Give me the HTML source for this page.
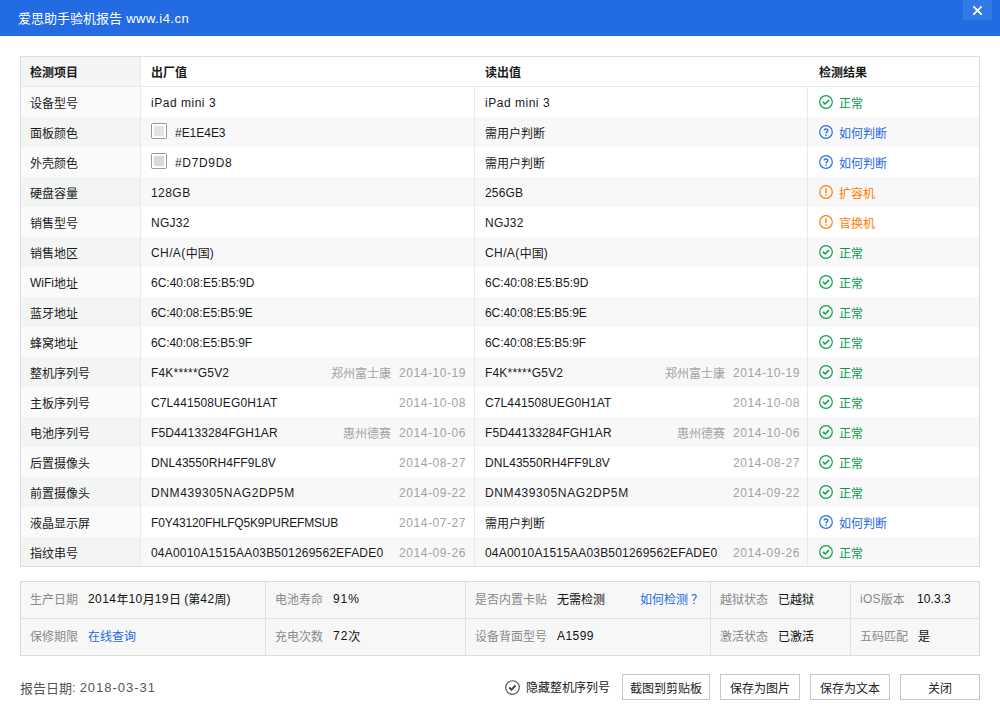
<!DOCTYPE html>
<html lang="zh-CN">
<head>
<meta charset="utf-8">
<title>爱思助手验机报告</title>
<style>
*{margin:0;padding:0;box-sizing:border-box}
html,body{width:1000px;height:720px;overflow:hidden;background:#fff}
body{position:relative;font-family:"Liberation Sans","Noto Sans CJK SC",sans-serif;font-size:12px;color:#1a1a1a}
.abs{position:absolute}
.z{position:relative;top:1px}
#bar{left:0;top:0;width:1000px;height:36px;background:#236be3}
#title{left:18px;top:1px;height:36px;line-height:36px;color:#fff;font-size:13px;white-space:nowrap}
#title .z{top:0}
#close{left:963px;top:0;width:29px;height:20px;background:#3179e7}
#tbl{left:20px;top:56px;width:960px;height:511px;border:1px solid #dedede;background:#fff;overflow:hidden}
.r{position:absolute;left:0;width:958px;height:30px;line-height:30px;white-space:nowrap}
.r.alt{background:#f8f8f8}
.c1{position:absolute;left:0;top:0;width:119px;height:30px;background:#fafafa}
.c1 b{position:absolute;left:9px;top:1px;font-weight:normal}
.alt .c1{background:#f3f4f4}
.c{position:absolute;top:1px;height:30px}
.c2{left:130px}.c3{left:464px}.c4{left:798px}
.fac{position:absolute;top:1px;color:#a3a3a3}
.dt{position:absolute;top:1px;color:#a3a3a3}
.il{position:absolute;color:#8a8a8a;white-space:nowrap;height:36px;line-height:36px}
.iv{position:absolute;color:#111;white-space:nowrap;height:36px;line-height:36px}
.g{color:#0a9a4a}.b{color:#2468e4}.o{color:#ff7b00}
.ic{position:absolute;left:0;top:7px;width:14px;height:14px}
.st{position:absolute;left:20px;top:0}
.vl{position:absolute;top:30px;width:1px;height:480px;background:#e9e9e9}
.sw{position:absolute;left:0px;top:5px;width:16px;height:16px;border:1px solid #999;border-radius:1.5px;background:#fff}
.sw i{position:absolute;left:2px;top:2px;width:10px;height:10px}
#hd{top:0;height:29px;line-height:29px;font-weight:bold;background:#fff}
#hd .c1{height:29px;background:#f3f4f4}
#hd .c1 b{font-weight:bold}
#info{left:20px;top:581px;width:960px;height:75px;border:1px solid #dcdcdc;background:#f7f7f7}
.iv i{font-style:normal;margin-left:3px}
.ivl{position:absolute;top:0;width:1px;height:73px;background:#e2e2e2}
.btn{position:absolute;top:674px;height:26px;line-height:26px;border:1px solid #c6c6c6;background:#fff;text-align:center;color:#222}
</style>
</head>
<body>
<div id="bar" class="abs"></div>
<div id="title" class="abs"><span class="z">爱思助手验机报告</span><span style="letter-spacing:0.51px"> www.i4.cn</span></div>
<div id="close" class="abs"><svg width="29" height="20" viewBox="0 0 29 20"><path d="M10.3 6.3 L18.7 14.7 M18.7 6.3 L10.3 14.7" stroke="#fff" stroke-width="1.9" fill="none"/></svg></div>
<div id="tbl" class="abs">
<div id="hd" class="r"><div class="c1"><b><span class="z">检测项目</span></b></div><div class="c c2"><span class="z">出厂值</span></div><div class="c c3"><span class="z">读出值</span></div><div class="c c4"><span class="z">检测结果</span></div></div>
<div class="abs" style="left:0;top:29px;width:958px;height:1px;background:#e6e6e6"></div>
<div class="r" style="top:30px"><div class="c1"><b><span class="z">设备型号</span></b></div><div class="c c2"><span style="letter-spacing:0.52px">iPad mini 3</span></div><div class="c c3"><span style="letter-spacing:0.52px">iPad mini 3</span></div><div class="c c4 g"><svg class="ic" viewBox="0 0 14 14"><circle cx="7" cy="7" r="6.3" fill="none" stroke="#0f9f4f" stroke-width="1.2"/><path d="M3.9 6.9 L6.1 9 L10 5.1" fill="none" stroke="#0f9f4f" stroke-width="1.5"/></svg><span class="st"><span class="z">正常</span></span></div></div>
<div class="r alt" style="top:60px"><div class="c1"><b><span class="z">面板颜色</span></b></div><div class="c c2"><span class="sw"><i style="background:#e1e4e3"></i></span><span style="position:absolute;left:24px"><span style="letter-spacing:-0.03px">#E1E4E3</span></span></div><div class="c c3"><span class="z">需用户判断</span></div><div class="c c4 b"><svg class="ic" viewBox="0 0 14 14"><circle cx="7" cy="7" r="6.3" fill="none" stroke="#2b6fe6" stroke-width="1.2"/><path d="M5.2 5.6 C5.2 3.4 8.8 3.4 8.8 5.5 C8.8 6.9 7 6.9 7 8.4" fill="none" stroke="#2b6fe6" stroke-width="1.4"/><rect x="6.3" y="9.6" width="1.4" height="1.4" fill="#2b6fe6"/></svg><span class="st"><span class="z">如何判断</span></span></div></div>
<div class="r" style="top:90px"><div class="c1"><b><span class="z">外壳颜色</span></b></div><div class="c c2"><span class="sw"><i style="background:#d7d9d8"></i></span><span style="position:absolute;left:24px"><span style="letter-spacing:0.67px">#D7D9D8</span></span></div><div class="c c3"><span class="z">需用户判断</span></div><div class="c c4 b"><svg class="ic" viewBox="0 0 14 14"><circle cx="7" cy="7" r="6.3" fill="none" stroke="#2b6fe6" stroke-width="1.2"/><path d="M5.2 5.6 C5.2 3.4 8.8 3.4 8.8 5.5 C8.8 6.9 7 6.9 7 8.4" fill="none" stroke="#2b6fe6" stroke-width="1.4"/><rect x="6.3" y="9.6" width="1.4" height="1.4" fill="#2b6fe6"/></svg><span class="st"><span class="z">如何判断</span></span></div></div>
<div class="r alt" style="top:120px"><div class="c1"><b><span class="z">硬盘容量</span></b></div><div class="c c2"><span style="letter-spacing:0.45px">128GB</span></div><div class="c c3"><span style="letter-spacing:0.15px">256GB</span></div><div class="c c4 o"><svg class="ic" viewBox="0 0 14 14"><circle cx="7" cy="7" r="6.3" fill="none" stroke="#ff7f0a" stroke-width="1.2"/><rect x="6.3" y="3.4" width="1.4" height="4.8" fill="#ff7f0a"/><rect x="6.3" y="9.2" width="1.4" height="1.2" fill="#ff7f0a"/></svg><span class="st"><span class="z">扩容机</span></span></div></div>
<div class="r" style="top:150px"><div class="c1"><b><span class="z">销售型号</span></b></div><div class="c c2"><span style="letter-spacing:0.25px">NGJ32</span></div><div class="c c3"><span style="letter-spacing:0.25px">NGJ32</span></div><div class="c c4 o"><svg class="ic" viewBox="0 0 14 14"><circle cx="7" cy="7" r="6.3" fill="none" stroke="#ff7f0a" stroke-width="1.2"/><rect x="6.3" y="3.4" width="1.4" height="4.8" fill="#ff7f0a"/><rect x="6.3" y="9.2" width="1.4" height="1.2" fill="#ff7f0a"/></svg><span class="st"><span class="z">官换机</span></span></div></div>
<div class="r alt" style="top:180px"><div class="c1"><b><span class="z">销售地区</span></b></div><div class="c c2"><span style="letter-spacing:0.40px">CH/A(</span><span class="z">中国</span>)</div><div class="c c3"><span style="letter-spacing:0.40px">CH/A(</span><span class="z">中国</span>)</div><div class="c c4 g"><svg class="ic" viewBox="0 0 14 14"><circle cx="7" cy="7" r="6.3" fill="none" stroke="#0f9f4f" stroke-width="1.2"/><path d="M3.9 6.9 L6.1 9 L10 5.1" fill="none" stroke="#0f9f4f" stroke-width="1.5"/></svg><span class="st"><span class="z">正常</span></span></div></div>
<div class="r" style="top:210px"><div class="c1"><b>WiFi<span class="z">地址</span></b></div><div class="c c2">6C:40:08:E5:B5:9D</div><div class="c c3">6C:40:08:E5:B5:9D</div><div class="c c4 g"><svg class="ic" viewBox="0 0 14 14"><circle cx="7" cy="7" r="6.3" fill="none" stroke="#0f9f4f" stroke-width="1.2"/><path d="M3.9 6.9 L6.1 9 L10 5.1" fill="none" stroke="#0f9f4f" stroke-width="1.5"/></svg><span class="st"><span class="z">正常</span></span></div></div>
<div class="r alt" style="top:240px"><div class="c1"><b><span class="z">蓝牙地址</span></b></div><div class="c c2"><span style="letter-spacing:-0.06px">6C:40:08:E5:B5:9E</span></div><div class="c c3"><span style="letter-spacing:-0.06px">6C:40:08:E5:B5:9E</span></div><div class="c c4 g"><svg class="ic" viewBox="0 0 14 14"><circle cx="7" cy="7" r="6.3" fill="none" stroke="#0f9f4f" stroke-width="1.2"/><path d="M3.9 6.9 L6.1 9 L10 5.1" fill="none" stroke="#0f9f4f" stroke-width="1.5"/></svg><span class="st"><span class="z">正常</span></span></div></div>
<div class="r" style="top:270px"><div class="c1"><b><span class="z">蜂窝地址</span></b></div><div class="c c2"><span style="letter-spacing:-0.06px">6C:40:08:E5:B5:9F</span></div><div class="c c3"><span style="letter-spacing:-0.06px">6C:40:08:E5:B5:9F</span></div><div class="c c4 g"><svg class="ic" viewBox="0 0 14 14"><circle cx="7" cy="7" r="6.3" fill="none" stroke="#0f9f4f" stroke-width="1.2"/><path d="M3.9 6.9 L6.1 9 L10 5.1" fill="none" stroke="#0f9f4f" stroke-width="1.5"/></svg><span class="st"><span class="z">正常</span></span></div></div>
<div class="r alt" style="top:300px"><div class="c1"><b><span class="z">整机序列号</span></b></div><div class="c c2"><span style="letter-spacing:0.18px">F4K*****G5V2</span></div><div class="fac" style="right:588px"><span class="z">郑州富士康</span></div><div class="dt" style="right:513px"><span style="letter-spacing:0.56px">2014-10-19</span></div><div class="c c3"><span style="letter-spacing:0.18px">F4K*****G5V2</span></div><div class="fac" style="right:254px"><span class="z">郑州富士康</span></div><div class="dt" style="right:179px"><span style="letter-spacing:0.56px">2014-10-19</span></div><div class="c c4 g"><svg class="ic" viewBox="0 0 14 14"><circle cx="7" cy="7" r="6.3" fill="none" stroke="#0f9f4f" stroke-width="1.2"/><path d="M3.9 6.9 L6.1 9 L10 5.1" fill="none" stroke="#0f9f4f" stroke-width="1.5"/></svg><span class="st"><span class="z">正常</span></span></div></div>
<div class="r" style="top:330px"><div class="c1"><b><span class="z">主板序列号</span></b></div><div class="c c2"><span style="letter-spacing:0.11px">C7L441508UEG0H1AT</span></div><div class="dt" style="right:513px"><span style="letter-spacing:0.56px">2014-10-08</span></div><div class="c c3"><span style="letter-spacing:0.11px">C7L441508UEG0H1AT</span></div><div class="dt" style="right:179px"><span style="letter-spacing:0.56px">2014-10-08</span></div><div class="c c4 g"><svg class="ic" viewBox="0 0 14 14"><circle cx="7" cy="7" r="6.3" fill="none" stroke="#0f9f4f" stroke-width="1.2"/><path d="M3.9 6.9 L6.1 9 L10 5.1" fill="none" stroke="#0f9f4f" stroke-width="1.5"/></svg><span class="st"><span class="z">正常</span></span></div></div>
<div class="r alt" style="top:360px"><div class="c1"><b><span class="z">电池序列号</span></b></div><div class="c c2"><span style="letter-spacing:0.12px">F5D44133284FGH1AR</span></div><div class="fac" style="right:588px"><span class="z">惠州德赛</span></div><div class="dt" style="right:513px"><span style="letter-spacing:0.56px">2014-10-06</span></div><div class="c c3"><span style="letter-spacing:0.12px">F5D44133284FGH1AR</span></div><div class="fac" style="right:254px"><span class="z">惠州德赛</span></div><div class="dt" style="right:179px"><span style="letter-spacing:0.56px">2014-10-06</span></div><div class="c c4 g"><svg class="ic" viewBox="0 0 14 14"><circle cx="7" cy="7" r="6.3" fill="none" stroke="#0f9f4f" stroke-width="1.2"/><path d="M3.9 6.9 L6.1 9 L10 5.1" fill="none" stroke="#0f9f4f" stroke-width="1.5"/></svg><span class="st"><span class="z">正常</span></span></div></div>
<div class="r" style="top:390px"><div class="c1"><b><span class="z">后置摄像头</span></b></div><div class="c c2"><span style="letter-spacing:0.05px">DNL43550RH4FF9L8V</span></div><div class="dt" style="right:513px"><span style="letter-spacing:0.56px">2014-08-27</span></div><div class="c c3"><span style="letter-spacing:0.05px">DNL43550RH4FF9L8V</span></div><div class="dt" style="right:179px"><span style="letter-spacing:0.56px">2014-08-27</span></div><div class="c c4 g"><svg class="ic" viewBox="0 0 14 14"><circle cx="7" cy="7" r="6.3" fill="none" stroke="#0f9f4f" stroke-width="1.2"/><path d="M3.9 6.9 L6.1 9 L10 5.1" fill="none" stroke="#0f9f4f" stroke-width="1.5"/></svg><span class="st"><span class="z">正常</span></span></div></div>
<div class="r alt" style="top:420px"><div class="c1"><b><span class="z">前置摄像头</span></b></div><div class="c c2"><span style="letter-spacing:0.61px">DNM439305NAG2DP5M</span></div><div class="dt" style="right:513px"><span style="letter-spacing:0.56px">2014-09-22</span></div><div class="c c3"><span style="letter-spacing:0.61px">DNM439305NAG2DP5M</span></div><div class="dt" style="right:179px"><span style="letter-spacing:0.56px">2014-09-22</span></div><div class="c c4 g"><svg class="ic" viewBox="0 0 14 14"><circle cx="7" cy="7" r="6.3" fill="none" stroke="#0f9f4f" stroke-width="1.2"/><path d="M3.9 6.9 L6.1 9 L10 5.1" fill="none" stroke="#0f9f4f" stroke-width="1.5"/></svg><span class="st"><span class="z">正常</span></span></div></div>
<div class="r" style="top:450px"><div class="c1"><b><span class="z">液晶显示屏</span></b></div><div class="c c2"><span style="letter-spacing:-0.17px">F0Y43120FHLFQ5K9PUREFMSUB</span></div><div class="dt" style="right:513px"><span style="letter-spacing:0.56px">2014-07-27</span></div><div class="c c3"><span class="z">需用户判断</span></div><div class="c c4 b"><svg class="ic" viewBox="0 0 14 14"><circle cx="7" cy="7" r="6.3" fill="none" stroke="#2b6fe6" stroke-width="1.2"/><path d="M5.2 5.6 C5.2 3.4 8.8 3.4 8.8 5.5 C8.8 6.9 7 6.9 7 8.4" fill="none" stroke="#2b6fe6" stroke-width="1.4"/><rect x="6.3" y="9.6" width="1.4" height="1.4" fill="#2b6fe6"/></svg><span class="st"><span class="z">如何判断</span></span></div></div>
<div class="r alt" style="top:480px"><div class="c1"><b><span class="z">指纹串号</span></b></div><div class="c c2"><span style="letter-spacing:0.19px">04A0010A1515AA03B501269562EFADE0</span></div><div class="dt" style="right:513px"><span style="letter-spacing:0.56px">2014-09-26</span></div><div class="c c3"><span style="letter-spacing:0.19px">04A0010A1515AA03B501269562EFADE0</span></div><div class="dt" style="right:179px"><span style="letter-spacing:0.56px">2014-09-26</span></div><div class="c c4 g"><svg class="ic" viewBox="0 0 14 14"><circle cx="7" cy="7" r="6.3" fill="none" stroke="#0f9f4f" stroke-width="1.2"/><path d="M3.9 6.9 L6.1 9 L10 5.1" fill="none" stroke="#0f9f4f" stroke-width="1.5"/></svg><span class="st"><span class="z">正常</span></span></div></div>
<div class="vl" style="left:119px;top:0;height:510px"></div>
<div class="vl" style="left:453px"></div>
<div class="vl" style="left:786px"></div>
</div>
<div id="info" class="abs">
<div class="abs" style="left:0;top:36px;width:958px;height:1px;background:#e2e2e2"></div>
<div class="ivl" style="left:244px"></div><div class="ivl" style="left:444px"></div><div class="ivl" style="left:689px"></div><div class="ivl" style="left:829px"></div>
<div class="il" style="left:9px;top:-1px"><span class="z">生产日期</span></div>
<div class="iv" style="left:67px;top:-1px"><span style="letter-spacing:0.44px">2014</span><span class="z">年</span><span style="letter-spacing:0.44px">10</span><span class="z">月</span><span style="letter-spacing:0.44px">19</span><span class="z">日</span> (<span class="z">第</span><span style="letter-spacing:0.44px">42</span><span class="z">周</span>)</div>
<div class="il" style="left:254px;top:-1px"><span class="z">电池寿命</span></div>
<div class="iv" style="left:312px;top:-1px"><span style="letter-spacing:0.90px">91%</span></div>
<div class="il" style="left:454px;top:-1px"><span class="z">是否内置卡贴</span></div>
<div class="iv" style="left:536px;top:-1px"><span class="z">无需检测</span></div>
<div class="iv b" style="left:619px;top:-1px"><span class="z">如何检测</span><i><span class="z">？</span></i></div>
<div class="il" style="left:699px;top:-1px"><span class="z">越狱状态</span></div>
<div class="iv" style="left:757px;top:-1px"><span class="z">已越狱</span></div>
<div class="il" style="left:839px;top:-1px"><span style="letter-spacing:0.27px">iOS</span><span class="z">版本</span></div>
<div class="iv" style="left:896px;top:-1px"><span style="letter-spacing:0.08px">10.3.3</span></div>
<div class="il" style="left:9px;top:36px"><span class="z">保修期限</span></div>
<div class="iv b" style="left:67px;top:36px"><span class="z">在线查询</span></div>
<div class="il" style="left:254px;top:36px"><span class="z">充电次数</span></div>
<div class="iv" style="left:312px;top:36px"><span style="letter-spacing:1.00px">72</span><span class="z">次</span></div>
<div class="il" style="left:454px;top:36px"><span class="z">设备背面型号</span></div>
<div class="iv" style="left:536px;top:36px"><span style="letter-spacing:0.45px">A1599</span></div>
<div class="il" style="left:699px;top:36px"><span class="z">激活状态</span></div>
<div class="iv" style="left:757px;top:36px"><span class="z">已激活</span></div>
<div class="il" style="left:839px;top:36px"><span class="z">五码匹配</span></div>
<div class="iv" style="left:897px;top:36px"><span class="z">是</span></div>
</div>
<div class="abs" style="left:20px;top:675px;height:26px;line-height:26px;font-size:13px;color:#555;white-space:nowrap"><span class="z">报告日期</span>:<span style="margin-left:4px"><span style="letter-spacing:0.97px">2018-03-31</span></span></div>
<svg class="abs" style="left:505px;top:680px" width="15" height="15" viewBox="0 0 15 15"><circle cx="7.5" cy="7.5" r="6.8" fill="none" stroke="#505050" stroke-width="1.15"/><path d="M4.2 7.5 L6.5 9.7 L10.5 5.5" fill="none" stroke="#444" stroke-width="1.9"/></svg>
<div class="abs" style="left:526px;top:674px;height:26px;line-height:26px;white-space:nowrap"><span class="z">隐藏整机序列号</span></div>
<div class="btn" style="left:622px;width:88px"><span class="z">截图到剪贴板</span></div>
<div class="btn" style="left:720px;width:80px"><span class="z">保存为图片</span></div>
<div class="btn" style="left:810px;width:80px"><span class="z">保存为文本</span></div>
<div class="btn" style="left:900px;width:80px"><span class="z">关闭</span></div>
</body>
</html>
